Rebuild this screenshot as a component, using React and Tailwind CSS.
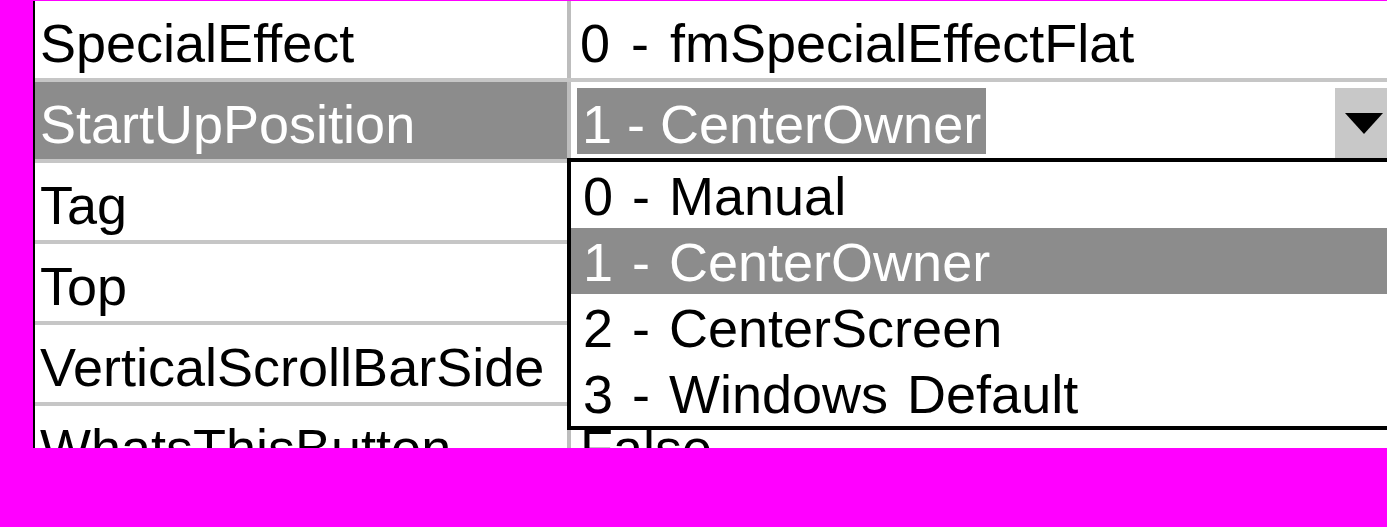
import React from 'react';

// 属性表：左列属性名，右列属性值；StartUpPosition 行展开下拉列表
const ROWS = [
  { name: 'SpecialEffect', value: '0 - fmSpecialEffectFlat' },
  { name: 'StartUpPosition', value: '1 - CenterOwner', active: true },
  { name: 'Tag', value: '' },
  { name: 'Top', value: '' },
  { name: 'VerticalScrollBarSide', value: '' },
  { name: 'WhatsThisButton', value: 'False' },
];

const OPTIONS = ['0 - Manual', '1 - CenterOwner', '2 - CenterScreen', '3 - Windows Default'];

function PropRow({ row }) {
  return (
    <div className="flex h-[81px] flex-shrink-0 border-b-4 border-[#c6c6c6]">
      <div
        className={`w-[536px] flex-shrink-0 border-r-4 border-[#bdbdbd] pl-[5px] pt-[8px] leading-[69px] whitespace-nowrap ${
          row.active ? 'bg-[#8c8c8c] text-white' : 'text-black'
        }`}
      >
        {row.name}
      </div>
      {row.active ? (
        <div className="flex flex-1 min-w-0 items-start bg-white">
          <span className="ml-[6px] mt-[6px] h-[66px] px-[5px] pt-[7px] leading-[59px] bg-[#8c8c8c] text-white whitespace-nowrap">
            {row.value}
          </span>
          <div className="ml-auto mt-[4px] h-[72px] w-[54px] flex items-center pl-[10px] bg-[#c8c8c8] border-l-2 border-t-2 border-white">
            <div className="w-0 h-0 border-l-[19px] border-r-[19px] border-t-[21px] border-l-transparent border-r-transparent border-t-black" />
          </div>
        </div>
      ) : (
        <div className="flex-1 min-w-0 pl-[9px] pt-[8px] leading-[69px] text-black whitespace-nowrap [word-spacing:6px]">
          {row.value}
        </div>
      )}
    </div>
  );
}

export default function App() {
  return (
    <div className="w-full h-[527px] bg-[#ff00ff] pt-[1px] pl-[33px] font-['Liberation_Sans',Arial,sans-serif] text-[54px]">
      <div className="relative h-[447px] overflow-hidden border-l-2 border-black bg-white flex flex-col">
        {ROWS.map((row) => (
          <PropRow key={row.name} row={row} />
        ))}

        {/* 下拉列表 */}
        <div className="absolute left-[532px] top-[157px] w-[880px] border-4 border-black bg-white">
          {OPTIONS.map((opt, i) => (
            <div
              key={opt}
              className={`h-[66px] pl-[12px] pt-[3px] leading-[63px] whitespace-nowrap [word-spacing:4px] ${
                i === 1 ? 'bg-[#8c8c8c] text-white' : 'text-black'
              }`}
            >
              {opt}
            </div>
          ))}
        </div>
      </div>
    </div>
  );
}
